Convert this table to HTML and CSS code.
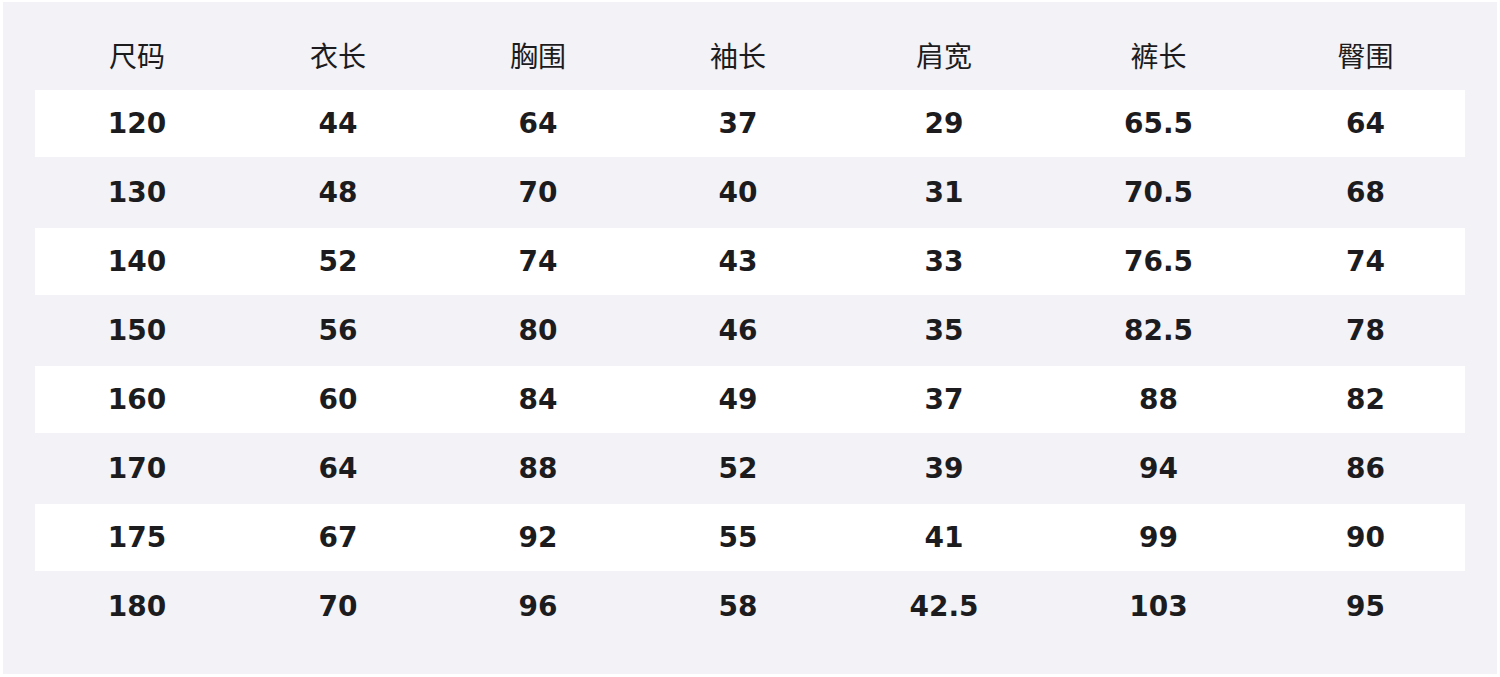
FILE: index.html
```html
<!DOCTYPE html>
<html lang="zh-CN">
<head>
<meta charset="utf-8">
<title>尺码表</title>
<link rel="stylesheet" href="styles.css">
</head>
<body>
<div class="panel">
  <table class="size-table">
    <colgroup>
      <col class="c1"><col class="c2"><col class="c3"><col class="c4"><col class="c5"><col class="c6"><col class="c7">
    </colgroup>
    <thead>
      <tr><th>尺码</th><th>衣长</th><th>胸围</th><th>袖长</th><th>肩宽</th><th>裤长</th><th>臀围</th></tr>
    </thead>
    <tbody>
      <tr><td>120</td><td>44</td><td>64</td><td>37</td><td>29</td><td>65.5</td><td>64</td></tr>
      <tr><td>130</td><td>48</td><td>70</td><td>40</td><td>31</td><td>70.5</td><td>68</td></tr>
      <tr><td>140</td><td>52</td><td>74</td><td>43</td><td>33</td><td>76.5</td><td>74</td></tr>
      <tr><td>150</td><td>56</td><td>80</td><td>46</td><td>35</td><td>82.5</td><td>78</td></tr>
      <tr><td>160</td><td>60</td><td>84</td><td>49</td><td>37</td><td>88</td><td>82</td></tr>
      <tr><td>170</td><td>64</td><td>88</td><td>52</td><td>39</td><td>94</td><td>86</td></tr>
      <tr><td>175</td><td>67</td><td>92</td><td>55</td><td>41</td><td>99</td><td>90</td></tr>
      <tr><td>180</td><td>70</td><td>96</td><td>58</td><td>42.5</td><td>103</td><td>95</td></tr>
    </tbody>
  </table>
</div>
</body>
</html>
```

FILE: styles.css
```css
html, body {
  margin: 0;
  padding: 0;
  background: #ffffff;
}

body {
  padding: 2px 3px 3px 3px;
  width: 1500px;
  height: 677px;
  box-sizing: border-box;
}

.panel {
  background: #f2f2f7;
  height: 672px;
  box-sizing: border-box;
  padding: 17px 32px 0 32px;
}

.size-table {
  width: 1430px;
  table-layout: fixed;
  border-collapse: separate;
  border-spacing: 0 2px;
  color: #1c1c1e;
}

.c1 { width: 204px; }
.c2 { width: 198px; }
.c3 { width: 202px; }
.c4 { width: 198px; }
.c5 { width: 214px; }
.c6 { width: 215px; }
.c7 { width: 199px; }

.size-table th,
.size-table td {
  height: 67px;
  padding: 0;
  text-align: center;
  vertical-align: middle;
}

.size-table th {
  font-family: "Noto Sans CJK SC", "Noto Sans", sans-serif;
  font-weight: 400;
  font-size: 28px;
  line-height: 1;
}

.size-table td {
  font-family: "DejaVu Sans", "Noto Sans CJK SC", sans-serif;
  font-weight: 700;
  font-size: 28px;
  line-height: 1;
}

.size-table tbody tr:nth-child(odd) td {
  background: #ffffff;
}
```
